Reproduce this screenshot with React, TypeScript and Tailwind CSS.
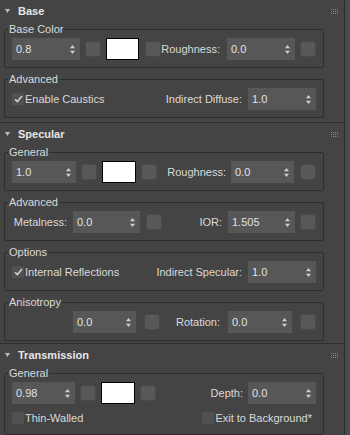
import type { JSX, ReactNode } from 'react';
import clsx from 'clsx';

function Arrows(): JSX.Element {
  return (
    <svg width="5" height="9" viewBox="0 0 5 9" className="shrink-0">
      <path d="M2.5 0L5 3.2H0z" fill="#cfcfcf" />
      <path d="M0 5.8h5L2.5 9z" fill="#cfcfcf" />
    </svg>
  );
}

function Spinner({ value, className }: { value: string; className?: string }): JSX.Element {
  return (
    <div
      className={clsx(
        'flex h-[22px] shrink-0 items-center justify-between bg-[#575757] pl-[4px] pr-[5px] text-[#e2e2e2]',
        className,
      )}
    >
      <span>{value}</span>
      <Arrows />
    </div>
  );
}

function Square({ className }: { className?: string }): JSX.Element {
  return (
    <div
      className={clsx(
        'h-[16px] w-[16px] shrink-0 rounded-[3px] border border-[#4a4a4a] bg-[#585858]',
        className,
      )}
    />
  );
}

function Swatch({ className }: { className?: string }): JSX.Element {
  return <div className={clsx('h-[22px] shrink-0 border border-black bg-white', className)} />;
}

function Check({ label, checked }: { label: string; checked?: boolean }): JSX.Element {
  return (
    <div className="flex items-center">
      <span className="flex h-[12px] w-[12px] items-center justify-center bg-[#515151]">
        {checked && (
          <svg width="9" height="8" viewBox="0 0 9 8">
            <path d="M1 4.2L3.4 6.6L8 1" fill="none" stroke="#d0d0d0" strokeWidth="1.6" />
          </svg>
        )}
      </span>
      <span className="ml-[1px]">{label}</span>
    </div>
  );
}

function Grip(): JSX.Element {
  return (
    <svg width="7" height="5" viewBox="0 0 7 5">
      {[0, 2, 4].map((y) =>
        [0, 2, 4, 6].map((x) => <rect key={`${x}-${y}`} x={x} y={y} width="1" height="1" fill="#8a8a8a" />),
      )}
    </svg>
  );
}

function Group({
  title,
  children,
  className,
}: {
  title: string;
  children: ReactNode;
  className?: string;
}): JSX.Element {
  return (
    <fieldset className={clsx('ml-[4px] w-[320px] rounded-[2px] border border-[#2e2e2e] p-0', className)}>
      <legend className="ml-[3px] px-[1px] leading-[14px]">{title}</legend>
      <div className="px-[7px] pb-[7px] pt-[2px]">{children}</div>
    </fieldset>
  );
}

function Rollout({
  title,
  children,
  className,
}: {
  title: string;
  children: ReactNode;
  className?: string;
}): JSX.Element {
  return (
    <section className={clsx('border-b border-[#2f2f2f]', className)}>
      <div className="flex h-[22px] items-center pl-[5px] pr-[6px]">
        <svg width="5" height="4" viewBox="0 0 5 4">
          <path d="M0 0h5L2.5 4z" fill="#bdbdbd" />
        </svg>
        <span className="ml-[8px] font-bold text-[#e6e6e6]">{title}</span>
        <span className="ml-auto">
          <Grip />
        </span>
      </div>
      <div className="flex flex-col gap-[4px]">{children}</div>
    </section>
  );
}

export default function App(): JSX.Element {
  return (
    <div className="flex h-[435px] w-[350px] overflow-hidden bg-[#444444] font-['Liberation_Sans',Arial,sans-serif] text-[11px] text-[#dadada]">
      <div className="w-[345px] shrink-0 border-r border-[#2b2b2b]">
        <Rollout title="Base" className="pb-[4px]">
          <Group title="Base Color">
            <div className="flex items-center">
              <Spinner value="0.8" className="w-[68px]" />
              <Square className="ml-[5px]" />
              <Swatch className="ml-[5px] w-[33px]" />
              <Square className="ml-[6px]" />
              <span className="mr-[7px] flex-1 text-right">Roughness:</span>
              <Spinner value="0.0" className="w-[68px]" />
              <Square className="ml-[5px]" />
            </div>
          </Group>
          <Group title="Advanced">
            <div className="flex items-center">
              <Check label="Enable Caustics" checked />
              <span className="mr-[6px] flex-1 text-right">Indirect Diffuse:</span>
              <Spinner value="1.0" className="w-[68px]" />
            </div>
          </Group>
        </Rollout>

        <Rollout title="Specular" className="pb-[2px]">
          <Group title="General">
            <div className="flex items-center">
              <Spinner value="1.0" className="w-[64px]" />
              <Square className="ml-[5px]" />
              <Swatch className="ml-[5px] w-[34px]" />
              <Square className="ml-[5px]" />
              <span className="mr-[5px] flex-1 text-right">Roughness:</span>
              <Spinner value="0.0" className="w-[63px]" />
              <Square className="ml-[6px]" />
            </div>
          </Group>
          <Group title="Advanced">
            <div className="flex items-center">
              <span className="w-[61px] shrink-0 pr-[6px] text-right">Metalness:</span>
              <Spinner value="0.0" className="w-[67px]" />
              <Square className="ml-[6px]" />
              <span className="mr-[6px] flex-1 text-right">IOR:</span>
              <Spinner value="1.505" className="w-[67px]" />
              <Square className="ml-[5px]" />
            </div>
          </Group>
          <Group title="Options">
            <div className="flex items-center">
              <Check label="Internal Reflections" checked />
              <span className="mr-[6px] flex-1 text-right">Indirect Specular:</span>
              <Spinner value="1.0" className="w-[68px]" />
            </div>
          </Group>
          <Group title="Anisotropy">
            <div className="flex items-center">
              <Spinner value="0.0" className="ml-[61px] w-[63px]" />
              <Square className="ml-[8px]" />
              <span className="mr-[8px] flex-1 text-right">Rotation:</span>
              <Spinner value="0.0" className="w-[64px]" />
              <Square className="ml-[8px]" />
            </div>
          </Group>
        </Rollout>

        <Rollout title="Transmission">
          <Group title="General">
            <div className="flex items-center">
              <Spinner value="0.98" className="w-[63px]" />
              <Square className="ml-[5px]" />
              <Swatch className="ml-[5px] w-[34px]" />
              <Square className="ml-[5px]" />
              <span className="mr-[5px] flex-1 text-right">Depth:</span>
              <Spinner value="0.0" className="w-[68px]" />
            </div>
            <div className="mt-[6px] flex items-center justify-between pr-[4px]">
              <Check label="Thin-Walled" />
              <Check label="Exit to Background*" />
            </div>
          </Group>
        </Rollout>
      </div>
      <div className="flex-1 bg-[#4a4a4a]" />
    </div>
  );
}
